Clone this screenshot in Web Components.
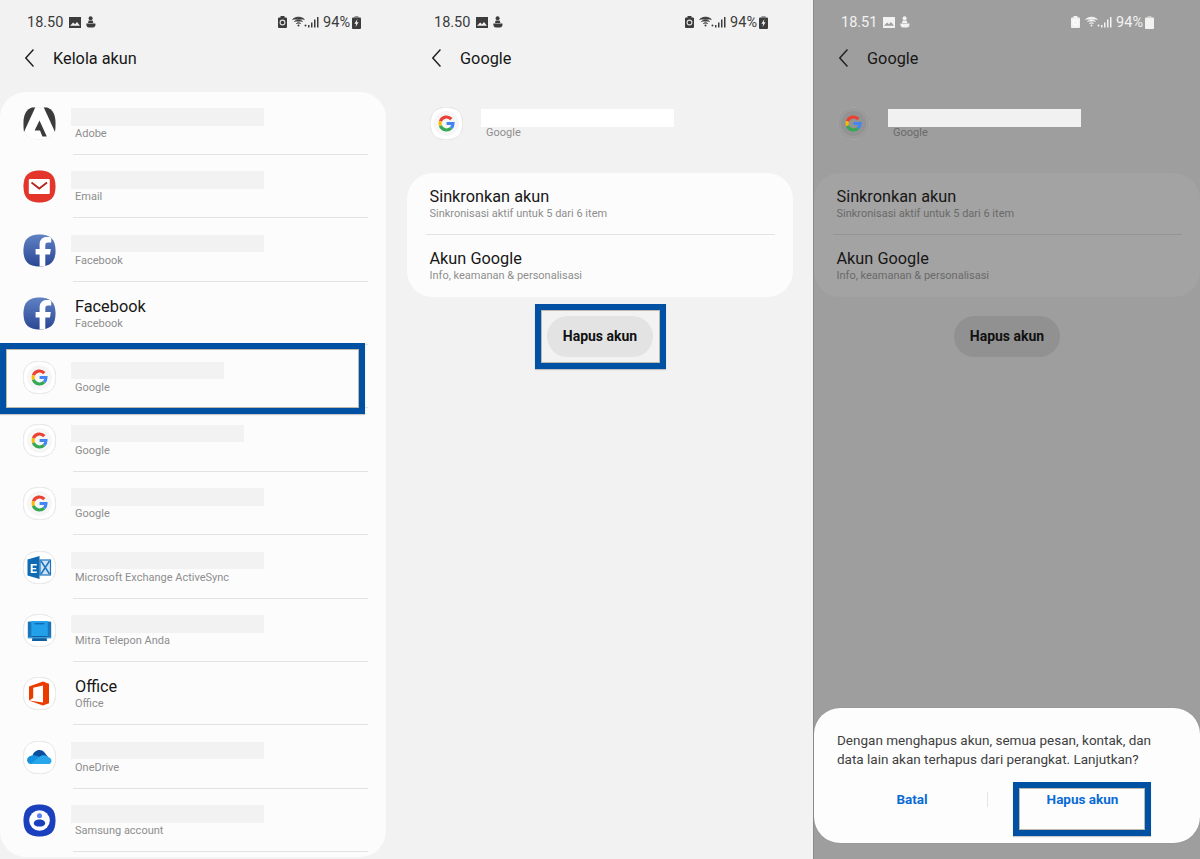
<!DOCTYPE html>
<html lang="id">
<head>
<meta charset="utf-8">
<title>Hapus akun</title>
<style>
  html, body { margin: 0; padding: 0; background: #f2f2f2; }
  body { width: 1200px; height: 859px; overflow: hidden; display: flex; font-family: Roboto, "Liberation Sans", sans-serif; }
</style>
</head>
<body>
<phone-panel>
  <status-bar time="18.50"></status-bar>
  <app-bar title="Kelola akun"></app-bar>
  <account-card>
    <account-row icon="adobe" sub="Adobe" bar="193"></account-row>
    <account-row icon="email" sub="Email" bar="193"></account-row>
    <account-row icon="facebook" sub="Facebook" bar="193"></account-row>
    <account-row icon="facebook" sub="Facebook" name="Facebook"></account-row>
    <account-row icon="google" sub="Google" bar="153"></account-row>
    <account-row icon="google" sub="Google" bar="173"></account-row>
    <account-row icon="google" sub="Google" bar="193"></account-row>
    <account-row icon="exchange" sub="Microsoft Exchange ActiveSync" bar="193"></account-row>
    <account-row icon="mitra" sub="Mitra Telepon Anda" bar="193"></account-row>
    <account-row icon="office" sub="Office" name="Office"></account-row>
    <account-row icon="onedrive" sub="OneDrive" bar="193"></account-row>
    <account-row icon="samsung" sub="Samsung account" bar="193"></account-row>
  </account-card>
  <highlight-box box="0,343,365,71"></highlight-box>
</phone-panel>

<phone-panel>
  <status-bar time="18.50"></status-bar>
  <app-bar title="Google"></app-bar>
  <account-header></account-header>
  <settings-card>
    <settings-item title="Sinkronkan akun" sub="Sinkronisasi aktif untuk 5 dari 6 item"></settings-item>
    <settings-item title="Akun Google" sub="Info, keamanan &amp; personalisasi"></settings-item>
  </settings-card>
  <pill-button>Hapus akun</pill-button>
  <highlight-box box="128,304,131,65"></highlight-box>
</phone-panel>

<phone-panel dim>
  <status-bar time="18.51"></status-bar>
  <app-bar title="Google"></app-bar>
  <account-header></account-header>
  <settings-card>
    <settings-item title="Sinkronkan akun" sub="Sinkronisasi aktif untuk 5 dari 6 item"></settings-item>
    <settings-item title="Akun Google" sub="Info, keamanan &amp; personalisasi"></settings-item>
  </settings-card>
  <pill-button>Hapus akun</pill-button>
  <confirm-dialog></confirm-dialog>
  <highlight-box box="199,782,138,54"></highlight-box>
</phone-panel>

<script>
  const SQUIRCLE = 'M16.5 .5C27.5 .5 32.5 5.5 32.5 16.5S27.5 32.5 16.5 32.5 .5 27.5 .5 16.5 5.5 .5 16.5 .5Z'
  let clipCount = 0

  // everything inside the tile, 33x33 box
  const ICONS = {
    adobe: () => `
      <path d="${SQUIRCLE}" fill="#fff"/>
      <path d="M9 .6H12.2L1 25C.6 22 .5 19.5 .5 16.5.5 8 3 2.5 9 .6Z" fill="#3b3b3b"/>
      <path d="M24 .6H20.8L32 25C32.4 22 32.5 19.5 32.5 16.5 32.5 8 30 2.5 24 .6Z" fill="#3b3b3b"/>
      <path d="M16.5 13.5L23.8 29.5H19.4L17 23.4H11.6Z" fill="#3b3b3b"/>`,
    email: () => `
      <path d="${SQUIRCLE}" fill="#e4352b"/>
      <rect x="5.8" y="9" width="21" height="15" rx="1" fill="#fff"/>
      <path d="M8.5 12.5L16.3 18.5 24 12.5" fill="none" stroke="#b3261e" stroke-width="1.8"/>`,
    facebook: () => {
      const id = 'fb' + clipCount++
      return `
      <defs>
        <linearGradient id="${id}" x1="0" y1="0" x2="0" y2="1">
          <stop offset="0" stop-color="#5f82c4"/><stop offset="1" stop-color="#2c4794"/>
        </linearGradient>
        <clipPath id="${id}c"><path d="${SQUIRCLE}"/></clipPath>
      </defs>
      <path d="${SQUIRCLE}" fill="url(#${id})"/>
      <path clip-path="url(#${id}c)" d="M22.3 33V20.4H27L27.8 15H22.3V11.4C22.3 9.8 22.9 8.6 25.2 8.6H28.2V3.4C27.6 3.3 25.8 3.1 23.8 3.1 19.6 3.1 16.6 5.7 16.6 10.6V15H12.6V20.4H16.6V33Z" fill="#fff"/>`
    },
    google: () => `
      <path d="${SQUIRCLE}" fill="var(--tile, #fff)" stroke="var(--tile-line, #ececec)"/>
      <circle cx="16.5" cy="16.5" r="12.5" fill="var(--tile-in, #f6f6f6)"/>
      <g fill="none" stroke-width="3.1">
        <path d="M10.4 14.28A6.5 6.5 0 0 1 21.33 12.15" stroke="#e94235"/>
        <path d="M10.4 14.28A6.5 6.5 0 0 0 10.4 18.72" stroke="#fabb05"/>
        <path d="M10.4 18.72A6.5 6.5 0 0 0 21.1 21.1" stroke="#34a853"/>
        <path d="M21.1 21.1A6.5 6.5 0 0 0 23 16.5H16.6" stroke="#4285f4"/>
      </g>`,
    exchange: () => `
      <path d="${SQUIRCLE}" fill="#fff" stroke="#ececec"/>
      <rect x="17" y="9" width="10.5" height="15" fill="#cfe3f5" stroke="#1c75bc" stroke-width="1.2"/>
      <path d="M18 10L26.5 23M26.5 10L18 23" stroke="#1c75bc" stroke-width="1.5"/>
      <path d="M4.5 8.5L16.5 5V28L4.5 24.5Z" fill="#0f6ab4"/>
      <text x="7" y="21.5" font-family="Roboto, sans-serif" font-size="12.5" font-weight="700" fill="#fff">E</text>`,
    mitra: () => `
      <path d="${SQUIRCLE}" fill="#fff" stroke="#ececec"/>
      <rect x="4.8" y="7.5" width="23.4" height="16.5" rx="1" fill="#1b76b8"/>
      <rect x="8.3" y="7" width="16.4" height="15" fill="#22a0ea"/>
      <rect x="11.5" y="9" width="10" height="1.4" fill="#0f6cb0"/>
      <path d="M9.5 22H23.5L24 27H9Z" fill="#0f5f9e"/>
      <rect x="4.8" y="23" width="23.4" height="1.4" fill="#3b9ad8"/>`,
    office: () => `
      <path d="${SQUIRCLE}" fill="#fff" stroke="#ececec"/>
      <path d="M6 9.6L20 4.4 26 6.8V26.2L20 28.6 6 23.6 20 25.4V8.4L10.2 10.7V21.1L6 23.6Z" fill="#eb3c00"/>`,
    onedrive: () => `
      <path d="${SQUIRCLE}" fill="#fff" stroke="#ececec"/>
      <path d="M9.5 15C10.5 10 17 6.5 21.5 11.5L25 16 15 21Z" fill="#0a4f9e"/>
      <path d="M8 23C2.5 22.5 2.8 15.5 8.5 14.5 12 13.7 14 14.5 16 16L22 21 19 23Z" fill="#1490df"/>
      <path d="M8 23H26C29.5 22.5 29.5 17 25 16 22 13.5 18.5 14 16 16Z" fill="#28a8ea"/>`,
    samsung: () => `
      <path d="${SQUIRCLE}" fill="#1a40bd"/>
      <circle cx="16.5" cy="16.5" r="10.3" fill="#fff"/>
      <circle cx="16.5" cy="11.8" r="2.5" fill="#5b82f2"/>
      <path d="M10.8 19.5C10.8 16.6 13.5 15.4 16.5 15.4S22.2 16.6 22.2 19.5C22.2 21.6 19.8 22.6 16.5 22.6S10.8 21.6 10.8 19.5Z" fill="#1a40bd"/>`
  }

  customElements.define('phone-panel', class extends HTMLElement {
    connectedCallback() {
      this.attachShadow({ mode: 'open' }).innerHTML = `
        <style>
          :host {
            display: block; position: relative; flex: none; width: 407px; height: 859px; overflow: hidden;
            background: #f2f2f2; color: #111;
            --status: #3c3c3c; --card: #fcfcfc; --sub: #8e8e8e; --line: #e3e3e3; --bar: #ffffff; --pill: #e3e3e3;
          }
          :host([dim]) {
            width: 386px; margin-left: -1px; border-left: 1px solid #8a8a8a;
            background: #9e9e9e;
            --status: #f2f2f2; --card: #a3a3a3; --sub: #6a6a6a; --line: #949494; --bar: #f1f1f1; --pill: #919191;
            --tile: #9b9b9b; --tile-line: #a8a8a8; --tile-in: #939393;
          }
        </style>
        <slot></slot>`
    }
  })

  customElements.define('status-bar', class extends HTMLElement {
    connectedCallback() {
      this.attachShadow({ mode: 'open' }).innerHTML = `
        <style>
          :host { display: flex; align-items: center; height: 44px; padding: 0 46px 0 27px; color: var(--status); font-size: 14.5px; }
          svg { display: block; flex: none; fill: currentColor; }
          .pic { margin-left: 6px; }
          .fig { margin-left: 5px; }
          .gap { flex: 1; }
          .wifi { margin-left: 5px; }
          .sig { margin-left: 1px; }
          .pct { margin-left: 4px; }
          .bat { margin-left: 2px; }
        </style>
        <span>${this.getAttribute('time')}</span>
        <svg class="pic" width="12" height="11" viewBox="0 0 12 11"><path d="M0 0H12V11H0ZM1 8.8H11L8 5 6 7.2 4.2 5.6Z" fill-rule="evenodd"/><circle cx="3" cy="3" r="1" fill="var(--status)"/></svg>
        <svg class="fig" width="10" height="12" viewBox="0 0 10 12"><circle cx="4.6" cy="2.2" r="2"/><path d="M2.6 4.4H6.6L7.4 7H2ZM.4 7.6H9.4C10 9.6 8.8 11.6 6.8 11.6H3C1 11.6 0 9.6 .4 7.6Z"/></svg>
        <span class="gap"></span>
        <svg width="9" height="12" viewBox="0 0 9 12"><path d="M2.5 0H6.5V1.5H8A1 1 0 0 1 9 2.5V11A1 1 0 0 1 8 12H1A1 1 0 0 1 0 11V2.5A1 1 0 0 1 1 1.5H2.5Z"/><circle cx="4.5" cy="6.5" r="2.4" fill="none" stroke="#fff" stroke-width="1.1" opacity=".85"/></svg>
        <svg class="wifi" width="15" height="12" viewBox="0 0 15 12" fill="none" stroke="currentColor" stroke-width="1"><path d="M.5 3.6C4 .4 9 .4 12.5 3.6M2.4 5.6C4.8 3.4 8.2 3.4 10.6 5.6M4.3 7.6C5.6 6.4 7.4 6.4 8.7 7.6"/><circle cx="6.5" cy="9.6" r="1" fill="currentColor" stroke="none"/><circle cx="13.5" cy="9.6" r="1" fill="currentColor" stroke="none"/></svg>
        <svg class="sig" width="11" height="12" viewBox="0 0 11 12"><rect x="0" y="9" width="1.5" height="2.5"/><rect x="3" y="6.5" width="1.5" height="5"/><rect x="6" y="3.5" width="1.5" height="8"/><rect x="9" y="1" width="1.5" height="10.5"/></svg>
        <span class="pct">94%</span>
        <svg class="bat" width="9" height="13" viewBox="0 0 9 13"><rect x="2.5" y="0" width="4" height="1.6" opacity=".5"/><rect x="0" y="1.6" width="9" height="11.4" rx="1"/><path d="M5.4 3L2.4 7.8H4.2L3.6 11 6.6 6.2H4.8Z" fill="#f2f2f2"/></svg>`
    }
  })

  customElements.define('app-bar', class extends HTMLElement {
    connectedCallback() {
      this.attachShadow({ mode: 'open' }).innerHTML = `
        <style>
          :host { display: flex; align-items: center; height: 28px; margin-bottom: 19.6px; padding-left: 25px; font-size: 16.3px; color: #171717; }
          svg { display: block; margin-right: 19px; }
        </style>
        <svg width="9" height="18" viewBox="0 0 9 18" fill="none" stroke="#222" stroke-width="1.5"><path d="M8.5 .5L.8 9 8.5 17.5"/></svg>
        <span>${this.getAttribute('title')}</span>`
    }
  })

  customElements.define('app-icon', class extends HTMLElement {
    connectedCallback() {
      const draw = ICONS[this.getAttribute('name')]
      this.attachShadow({ mode: 'open' }).innerHTML = `
        <style>
          :host { display: block; flex: none; width: 33px; height: 33px; }
          svg { display: block; filter: drop-shadow(0 .6px .5px rgba(0,0,0,.18)); }
        </style>
        <svg width="33" height="33" viewBox="0 0 33 33">${draw()}</svg>`
    }
  })

  customElements.define('account-card', class extends HTMLElement {
    connectedCallback() {
      this.attachShadow({ mode: 'open' }).innerHTML = `
        <style>
          :host { display: block; width: 386px; height: 765px; border-radius: 26px; background: var(--card); overflow: hidden; }
        </style>
        <slot></slot>`
    }
  })

  customElements.define('account-row', class extends HTMLElement {
    connectedCallback() {
      const name = this.getAttribute('name')
      const top = name
        ? `<div class="name">${name}</div>`
        : `<div class="bar" style="width:${this.getAttribute('bar')}px"></div>`
      this.attachShadow({ mode: 'open' }).innerHTML = `
        <style>
          :host {
            display: flex; box-sizing: border-box; height: 63.38px; padding: 15.5px 0 0 23px;
            background: linear-gradient(#e3e3e3, #e3e3e3) no-repeat 73px 100% / 295px 1px;
          }
          .text { margin-left: 15px; padding-top: 1px; }
          .bar { height: 17.5px; background: #f2f2f2; }
          .name { height: 17.5px; line-height: 17.5px; padding-left: 4px; font-size: 16.3px; color: #171717; }
          .sub { margin-top: 1.5px; padding-left: 4px; font-size: 11px; line-height: 14px; color: var(--sub); white-space: nowrap; }
        </style>
        <app-icon name="${this.getAttribute('icon')}"></app-icon>
        <div class="text">${top}<div class="sub">${this.getAttribute('sub')}</div></div>`
    }
  })

  customElements.define('account-header', class extends HTMLElement {
    connectedCallback() {
      this.attachShadow({ mode: 'open' }).innerHTML = `
        <style>
          :host { display: flex; height: 81px; box-sizing: border-box; padding: 15.4px 0 0 23px; }
          .text { margin-left: 18px; padding-top: 2px; }
          .bar { width: 193px; height: 18px; background: var(--bar); }
          .sub { margin-top: -1px; padding-left: 5px; font-size: 11px; line-height: 14px; color: var(--sub); }
        </style>
        <app-icon name="google"></app-icon>
        <div class="text"><div class="bar"></div><div class="sub">Google</div></div>`
    }
  })

  customElements.define('settings-card', class extends HTMLElement {
    connectedCallback() {
      this.attachShadow({ mode: 'open' }).innerHTML = `
        <style>
          :host { display: block; width: 386px; height: 124px; border-radius: 26px; background: var(--card); }
          ::slotted(settings-item:first-child) {
            background: linear-gradient(var(--line), var(--line)) no-repeat 18.5px 100% / 349px 1px;
          }
        </style>
        <slot></slot>`
    }
  })

  customElements.define('settings-item', class extends HTMLElement {
    connectedCallback() {
      this.attachShadow({ mode: 'open' }).innerHTML = `
        <style>
          :host { display: block; box-sizing: border-box; height: 62px; padding: 15px 0 0 22.5px; }
          .title { font-size: 16.3px; line-height: 18px; color: #171717; }
          .sub { margin-top: 1px; font-size: 11px; line-height: 14px; color: var(--sub); }
        </style>
        <div class="title">${this.getAttribute('title')}</div>
        <div class="sub">${this.getAttribute('sub')}</div>`
    }
  })

  customElements.define('pill-button', class extends HTMLElement {
    connectedCallback() {
      this.attachShadow({ mode: 'open' }).innerHTML = `
        <style>
          :host {
            display: flex; align-items: center; justify-content: center; box-sizing: border-box;
            width: 106px; height: 41px; margin: 19px 0 0 140px; border-radius: 21px;
            background: var(--pill); font-size: 14px; font-weight: 700; color: #111;
          }
        </style>
        <slot></slot>`
    }
  })

  customElements.define('highlight-box', class extends HTMLElement {
    connectedCallback() {
      const [x, y, w, h] = this.getAttribute('box').split(',')
      this.attachShadow({ mode: 'open' }).innerHTML = `
        <style>
          :host {
            display: block; position: absolute; box-sizing: border-box;
            left: ${x}px; top: ${y}px; width: ${w}px; height: ${h}px;
            border: 6px solid #0050a4;
            box-shadow: inset 0 0 0 1px #bdb8aa, 0 1px 1px rgba(0,0,0,.2);
          }
        </style>`
    }
  })

  customElements.define('confirm-dialog', class extends HTMLElement {
    connectedCallback() {
      this.attachShadow({ mode: 'open' }).innerHTML = `
        <style>
          :host {
            display: block; position: absolute; left: 0; top: 708px; width: 386px; height: 135px;
            box-sizing: border-box; padding: 23px 23px 0; border-radius: 26px; background: #fdfdfd;
            box-shadow: 0 0 1px rgba(0,0,0,.3);
          }
          p { margin: 0; font-size: 13.5px; line-height: 19px; color: #3f3f3f; white-space: nowrap; }
          .actions { display: grid; grid-template-columns: 150px 1px 1fr; align-items: center; height: 20px; margin-top: 20px; font-size: 13.5px; font-weight: 700; color: #0a6bd6; text-align: center; }
          .sep { height: 15px; background: #e6e6e6; }
        </style>
        <p>Dengan menghapus akun, semua pesan, kontak, dan<br>data lain akan terhapus dari perangkat. Lanjutkan?</p>
        <div class="actions"><span>Batal</span><span class="sep"></span><span>Hapus akun</span></div>`
    }
  })
</script>
</body>
</html>
